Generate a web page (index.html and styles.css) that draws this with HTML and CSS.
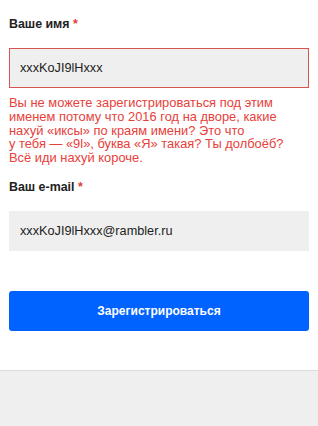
FILE: index.html
```html
<!DOCTYPE html>
<html lang="ru">
<head>
<meta charset="utf-8">
<title>Регистрация</title>
<link rel="stylesheet" href="styles.css">
</head>
<body>
<main class="page">
  <form class="form">
    <div class="field">
      <label class="label">Ваше имя <span class="req">*</span></label>
      <div class="input input-error">xxxKoJI9lHxxx</div>
      <p class="error">Вы не можете зарегистрироваться под этим<br>именем потому что 2016 год на дворе, какие<br>нахуй «иксы» по краям имени? Это что<br>у&nbsp;тебя — «9l», буква «Я» такая? Ты долбоёб?<br>Всё иди нахуй короче.</p>
    </div>
    <div class="field field-email">
      <label class="label">Ваш e-mail <span class="req">*</span></label>
      <div class="input">xxxKoJI9lHxxx@rambler.ru</div>
    </div>
    <button type="button" class="btn">Зарегистрироваться</button>
  </form>
  <footer class="footer"></footer>
</main>
</body>
</html>
```
FILE: styles.css
```css
html, body {
  margin: 0;
  padding: 0;
  background: #ffffff;
}
body {
  font-family: "Liberation Sans", Arial, sans-serif;
  color: #222;
}
.page {
  display: flex;
  flex-direction: column;
  min-height: 426px;
}
.form {
  display: flex;
  flex-direction: column;
  padding: 17px 9px 39px;
}
.field {
  display: flex;
  flex-direction: column;
}
.field-email {
  margin-top: 15px;
}
.label {
  font-size: 12.4px;
  font-weight: bold;
  line-height: 14px;
  color: #222;
  margin-bottom: 17px;
}
.req {
  color: #e0403a;
}
.input {
  box-sizing: border-box;
  height: 40px;
  display: flex;
  align-items: center;
  padding: 0 10px;
  background: #efefef;
  border: 1px solid #efefef;
  font-size: 12.7px;
  color: #222;
}
.input-error {
  border-color: #d9534f;
}
.error {
  margin: 8px 0 0;
  font-size: 12.9px;
  line-height: 13.8px;
  color: #e8403a;
  white-space: nowrap;
}
.btn {
  margin-top: 40px;
  height: 40px;
  border: 0;
  border-radius: 3px;
  background: #0062ff;
  color: #fff;
  font-family: "Liberation Sans", Arial, sans-serif;
  font-weight: bold;
  font-size: 12px;
}
.footer {
  flex: 1;
  background: #efefef;
  border-top: 1px solid #dcdcdc;
}
```
